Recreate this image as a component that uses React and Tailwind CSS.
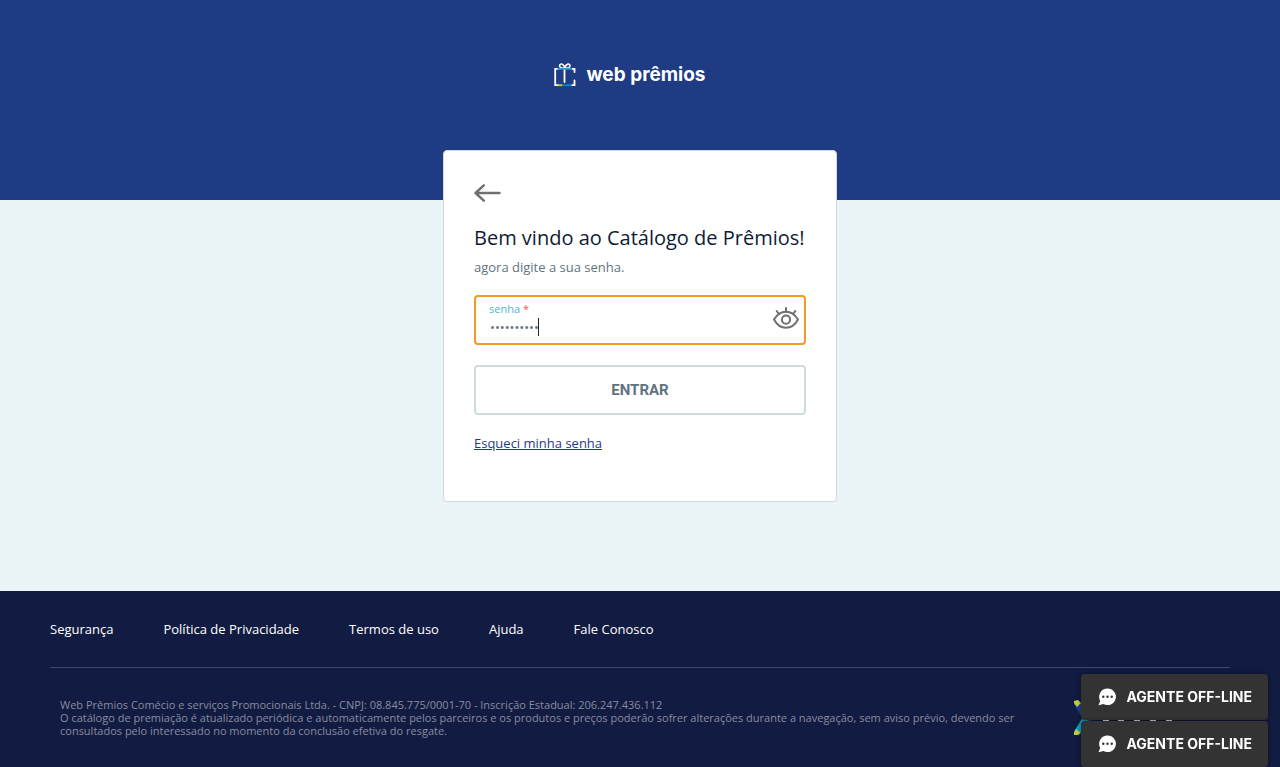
import { useState } from "react";

const footerLinks = ["Segurança", "Política de Privacidade", "Termos de uso", "Ajuda", "Fale Conosco"];

function GiftIcon() {
  return (
    <svg width="22" height="24" viewBox="0 0 22 24" fill="none" aria-hidden="true">
      <g stroke="#fff" strokeWidth="1.8" strokeLinecap="round">
        <path d="M4 5.8H1.2V22.2H4" />
        <path d="M18 5.8H20.5V9" />
        <path d="M20.5 17.5V22.2H18" />
        <path d="M10.500 6V19" />
        <path d="M10.800 5C8 5.400 5 4.500 5.600 2.400C6.400 0 10 1 10.800 5Z" strokeWidth="1.500" />
        <path d="M10.800 5C13.600 5.400 16.600 4.500 16 2.400C15.200 0 11.600 1 10.800 5Z" strokeWidth="1.500" />
      </g>
      <g strokeWidth="1.900">
        <path d="M3.500 5.800H18" stroke="#2f9ad0" />
        <path d="M3.500 22.200H8.500" stroke="#c3cf3c" />
        <path d="M8.500 22.200H17.500" stroke="#0e84c4" />
      </g>
    </svg>
  );
}

function ArrowLeft() {
  return (
    <svg width="27" height="18" viewBox="0 0 27 18" fill="none" stroke="#6f6f6f" strokeWidth="2.400" strokeLinecap="round" strokeLinejoin="round" aria-hidden="true">
      <path d="M9.800 1.300L1.500 9L9.800 16.700M1.500 9H25.500" />
    </svg>
  );
}

function EyeIcon() {
  return (
    <svg width="28" height="24" viewBox="0 0 28 24" fill="none" stroke="#6f6f6f" strokeWidth="2" strokeLinecap="round" strokeLinejoin="round" aria-hidden="true">
      <path d="M2 13.500C5 8.500 9.300 5.700 14 5.700S23 8.500 26 13.500C23 19 18.700 21.800 14 21.800S5 19 2 13.500Z" />
      <circle cx="14" cy="13.700" r="4.100" />
      <path d="M14 2V5.500M4.700 5L6.900 8M23.300 5L21.100 8" />
    </svg>
  );
}

function ChatIcon() {
  return (
    <svg width="18" height="18" viewBox="0 0 18 18" aria-hidden="true">
      <path d="M9.500 0.500A8.400 8.300 0 1 1 5.500 16.100L0.500 17.200L2.200 12.900A8.400 8.300 0 0 1 9.500 0.500Z" fill="#fff" />
      <g fill="#333">
        <circle cx="5.300" cy="8.800" r="1.200" />
        <circle cx="9.500" cy="8.800" r="1.200" />
        <circle cx="13.700" cy="8.800" r="1.200" />
      </g>
    </svg>
  );
}

function PartnerMark() {
  return (
    <svg width="100" height="36" viewBox="0 0 100 36" aria-hidden="true">
      <path d="M2 2L22 34" stroke="#1d3c87" strokeWidth="6" />
      <path d="M22 2L2 34" stroke="#0ba0c4" strokeWidth="6" />
      <path d="M0 1L4 0L7 3L3 7L0 3Z" fill="#c3cf3c" />
      <path d="M0 33L2 29L7 33L3 35L0 35Z" fill="#c3cf3c" />
      <path d="M29 20.500H35M44 20.500H50M60 20.500H66M76 20.500H82M92 20.500H98" stroke="#e4e6ea" strokeWidth="2" />
    </svg>
  );
}

function AgentButton() {
  return (
    <button type="button" className="flex h-[46px] items-center gap-2.5 rounded bg-[#333] pr-4 pl-[17px] font-['Inter',sans-serif] text-sm font-bold text-white shadow-[0_0_5px_rgba(0,0,0,0.4)]">
      <ChatIcon />
      AGENTE OFF-LINE
    </button>
  );
}

export default function App() {
  const [password, setPassword] = useState("1234567890");
  const [visible, setVisible] = useState(false);

  return (
    <div className="flex min-h-screen flex-col bg-[#eaf3f5] font-['Open_Sans',sans-serif] text-[13px]">
      <header className="flex h-[200px] shrink-0 justify-center bg-[#1f3b83] pt-[63px]">
        <a href="#" className="mr-5 flex h-6 items-center gap-2.5 text-white">
          <GiftIcon />
          <span className="font-['Inter',sans-serif] text-[19px] font-bold">web prêmios</span>
        </a>
      </header>

      <main className="-mt-[50px] flex grow flex-col items-center pb-10">
        <form onSubmit={(e) => e.preventDefault()} className="flex w-full max-w-[394px] flex-col items-start rounded border border-[#cfdcde] bg-white px-[30px] pt-[33px] pb-12">
          <button type="button" aria-label="Voltar">
            <ArrowLeft />
          </button>
          <h1 className="mt-[21px] text-xl leading-[30px] text-[#101b33]">Bem vindo ao Catálogo de Prêmios!</h1>
          <p className="mt-1 leading-5 text-[#5f7480]">agora digite a sua senha.</p>
          <div className="relative mt-[18px] flex h-[50px] w-full items-center rounded border-2 border-[#f29a27]">
            <div className="flex grow flex-col pb-0.5 pl-[13px]">
              <label htmlFor="senha" className="text-[11px] leading-4 text-[#55b3d3]">
                senha <span className="text-[#ff4f58]">*</span>
              </label>
              <input
                id="senha"
                type={visible ? "text" : "password"}
                value={password}
                onChange={(e) => setPassword(e.target.value)}
                className="h-5 w-full bg-transparent pl-px text-[13px] text-[#5f7480] outline-none"
              />
            </div>
            <span className="absolute top-[21px] left-[62px] h-[18px] w-px bg-[#222]" />
            <button type="button" aria-label="Mostrar senha" onClick={() => setVisible(!visible)} className="mr-1 mb-1 shrink-0">
              <EyeIcon />
            </button>
          </div>
          <button type="submit" className="mt-5 h-[50px] w-full rounded border-2 border-[#cfdcde] font-['Roboto',sans-serif] text-[15px] font-bold text-[#5f7480]">
            ENTRAR
          </button>
          <a href="#" className="mt-[18px] leading-5 text-[#1f3b83] underline">
            Esqueci minha senha
          </a>
        </form>
      </main>

      <footer className="bg-[#121b41] px-[50px] pt-7 pb-[30px]">
        <nav className="flex flex-wrap gap-x-[50px] border-b border-[#3f4766] pb-7 leading-5 text-white">
          {footerLinks.map((label) => (
            <a key={label} href="#">{label}</a>
          ))}
        </nav>
        <div className="mt-[30px] flex items-center justify-between pr-14 pl-2.5">
          <p className="max-w-[960px] text-[11px] leading-[13px] text-[#898d9f]">
            Web Prêmios Comécio e serviços Promocionais Ltda. - CNPJ: 08.845.775/0001-70 - Inscrição Estadual: 206.247.436.112
            <br />
            O catálogo de premiação é atualizado periódica e automaticamente pelos parceiros e os produtos e preços poderão sofrer alterações durante a navegação, sem aviso prévio, devendo ser consultados pelo interessado no momento da conclusão efetiva do resgate.
          </p>
          <PartnerMark />
        </div>
      </footer>

      <div className="fixed right-3 bottom-0 flex flex-col gap-px">
        <AgentButton />
        <AgentButton />
      </div>
    </div>
  );
}
